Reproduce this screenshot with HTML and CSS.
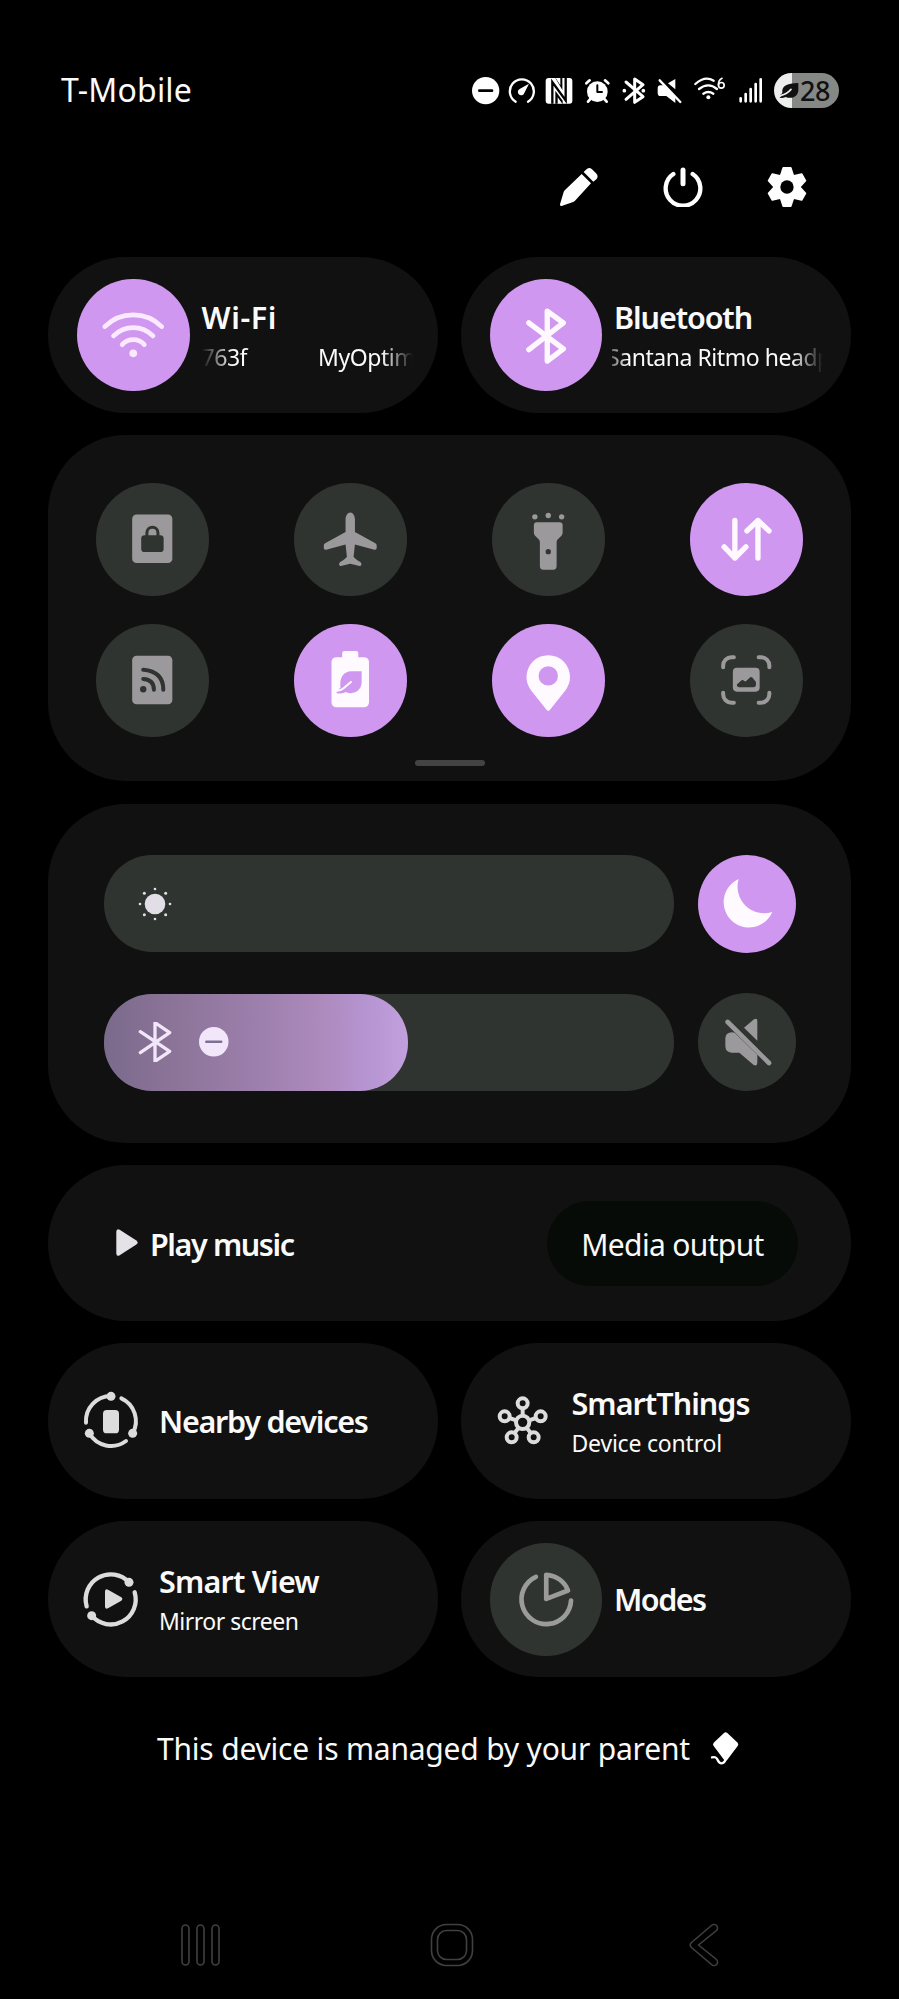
FILE: index.html
```html
<!DOCTYPE html>
<html lang="en">
<head>
<meta charset="utf-8">
<title>Quick panel</title>
<link rel="stylesheet" href="styles.css">
</head>
<body>
<header class="status">
  <span class="carrier">T-Mobile</span>
  <div class="status-icons">
    <svg width="32" height="35" viewBox="66 39 96 105"><circle cx="107" cy="92" r="41" fill="#fff"/><path d="M88 92h38" stroke="#000" stroke-width="8" stroke-linecap="round"/></svg>
    <svg width="36" height="35" viewBox="162 39 108 105"><path d="M197 125A36 36 0 1 1 234 125" fill="none" stroke="#fff" stroke-width="7" stroke-linecap="round"/><path d="M237 71L223 99A10 10 0 1 1 209 87Z" fill="#fff"/></svg>
    <svg width="38.7" height="35" viewBox="270 39 116 105"><rect x="287" y="54" width="80" height="77" rx="9" fill="#fff"/><path d="M307 131V66L347 121V54" fill="none" stroke="#000" stroke-width="7"/><path d="M316 131V92L338 122V131ZM316 54H337V90Z" fill="#000"/><path d="M317 54H331V76Z M323 131V112L337 131Z" fill="#fff"/></svg>
    <svg width="37" height="35" viewBox="386 39 111 105"><circle cx="441" cy="95" r="31" fill="#fff"/><path d="M441 76V96H455" fill="none" stroke="#000" stroke-width="6" stroke-linecap="round" stroke-linejoin="round"/><path d="M408 70L418 61M464 61L474 70M420 117L413 125M462 117L469 125" stroke="#fff" stroke-width="8" stroke-linecap="round"/></svg>
    <svg width="35.7" height="35" viewBox="497 39 107 105"><path d="M527 66L578 110L553 127V57L578 74L527 118" fill="none" stroke="#fff" stroke-width="9" stroke-linecap="round" stroke-linejoin="round"/><circle cx="522" cy="92" r="5.500" fill="#fff"/><circle cx="579" cy="92" r="5.500" fill="#fff"/></svg>
    <svg width="37" height="35" viewBox="604 39 111 105"><path d="M677 57V88L655 70ZM632 76H641L677 112V129L650 108H632Q624 108 624 98V86Q624 76 632 76Z" fill="#fff"/><path d="M630 61L692 126" stroke="#fff" stroke-width="7" stroke-linecap="round"/></svg>
    <svg width="43.7" height="35" viewBox="715 39 131 105"><path d="M737 72Q766 46 792 62M748 87Q776 65 802 87M761 101Q776 91 791 101" fill="none" stroke="#fff" stroke-width="7" stroke-linecap="round"/><circle cx="776" cy="112" r="6" fill="#fff"/><circle cx="815" cy="76" r="8.500" fill="none" stroke="#fff" stroke-width="5"/><path d="M806 75Q806 60 817 55" fill="none" stroke="#fff" stroke-width="5" stroke-linecap="round"/></svg>
    <svg width="42" height="35" viewBox="846 39 126 105"><path d="M872 115V124M887 102V124M902 87V124M917 72V124M932 58V124" stroke="#fff" stroke-width="8" stroke-linecap="round"/></svg>
    <div class="battery">
      <svg width="20" height="18" viewBox="0 0 60 54"><path d="M58 3V26C56 44 38 52 20 45Q10 49 2 47L10 40L3 38Q8 37 10 32C8 12 22 4 58 3Z" fill="#111"/><path d="M36 22Q24 36 6 40" stroke="#eee" stroke-width="5" fill="none" stroke-linecap="round"/></svg>
      <span>28</span>
    </div>
  </div>
</header>

<nav class="actions">
  <svg class="action" viewBox="-60 -60 120 120"><path d="M-57 52L-46 15Q-45 12 -42 9L8 -39L36 -11L-12 41Q-16 45 -20 46L-52 57Q-58 58 -57 52Z" fill="#fff"/><path d="M14 -45L21 -52Q30 -61 39 -53L51 -41Q60 -32 52 -23L43 -16Z" fill="#fff"/></svg>
  <svg class="action" viewBox="-60 -60 120 120"><path d="M-29 -39A52 52 0 1 0 29 -39" fill="none" stroke="#fff" stroke-width="13" stroke-linecap="round"/><path d="M0 -51V-10" stroke="#fff" stroke-width="15" stroke-linecap="round"/></svg>
  <svg class="action" viewBox="-60 -60 120 120"><g fill="#fff" stroke="#fff" stroke-width="6" stroke-linejoin="round"><path d="M-11 -57H11L19 -32H-19Z"/><path d="M-11 -57H11L19 -32H-19Z" transform="rotate(60)"/><path d="M-11 -57H11L19 -32H-19Z" transform="rotate(120)"/><path d="M-11 -57H11L19 -32H-19Z" transform="rotate(180)"/><path d="M-11 -57H11L19 -32H-19Z" transform="rotate(240)"/><path d="M-11 -57H11L19 -32H-19Z" transform="rotate(300)"/></g><circle r="42" fill="#fff"/><circle r="20" fill="#000"/></svg>
</nav>

<main class="panel">
  <div class="pair">
    <section class="card pill with-circle">
      <svg class="circle on" viewBox="-168 -168 336 336"><g fill="none" stroke="#fbe9ff" stroke-width="14" stroke-linecap="round"><path d="M-85 -26A121 121 0 0 1 85 -26"/><path d="M-59 2A82 82 0 0 1 59 2"/><path d="M-33 28A44 44 0 0 1 33 28"/></g><circle cy="54" r="11.500" fill="#fbe9ff"/></svg>
      <div class="labels"><span class="title t-wifi">Wi-Fi</span><div class="sub marquee"><span>763f</span><span>MyOptim</span></div></div>
    </section>
    <section class="card pill with-circle">
      <svg class="circle on" viewBox="-168 -168 336 336"><path d="M-52 -37L51 41L3 77V-72L51 -37L-52 43" fill="none" stroke="#fff8ff" stroke-width="16" stroke-linecap="round" stroke-linejoin="round"/></svg>
      <div class="labels"><span class="title t-bt">Bluetooth</span><div class="sub marquee bt"><span>Santana Ritmo headp</span></div></div>
    </section>
  </div>

  <section class="card tiles">
    <div class="tile-grid">
      <svg class="circle" viewBox="-168 -168 336 336"><rect x="-60" y="-74" width="120" height="145" rx="13" fill="#9b999b"/><rect x="-33" y="-12" width="67" height="50" rx="10" fill="#303430"/><path d="M-16 -8V-19A16.500 17 0 0 1 17 -19V-8" fill="none" stroke="#303430" stroke-width="9"/></svg>
      <svg class="circle" viewBox="-168 -168 336 336"><path d="M0 -80C8 -80 14 -70 14 -59V-22L75 12Q80 15 79 20V26Q78 33 72 31L14 16L10 52Q13 58 30 68Q35 72 33 77Q31 81 25 79L0 73L-25 79Q-31 81 -33 77Q-35 72 -30 68Q-13 58 -10 52L-14 16L-72 31Q-78 33 -79 26V20Q-80 15 -75 12L-14 -22V-59C-14 -70 -8 -80 0 -80Z" fill="#9b999b"/></svg>
      <svg class="circle" viewBox="-168 -168 336 336"><g fill="#9b999b"><circle cx="-40" cy="-67" r="8"/><circle cy="-71" r="8"/><circle cx="40" cy="-67" r="8"/><path d="M-34 -51H34Q43 -51 43 -42V-20Q43 -15 40 -11L28 1Q25 4 25 9V80Q25 91 15 91H-15Q-25 91 -25 80V9Q-25 4 -28 1L-40 -11Q-43 -15 -43 -20V-42Q-43 -51 -34 -51Z"/></g><circle cy="37" r="8" fill="#303430"/></svg>
      <svg class="circle on" viewBox="-168 -168 336 336"><path d="M-34 -56V56M-66 23L-34 56L-1 23M35 56V-56M2 -25L35 -56L68 -25" fill="none" stroke="#fff8ff" stroke-width="16" stroke-linecap="round" stroke-linejoin="round"/></svg>
      <svg class="circle" viewBox="-168 -168 336 336"><rect x="-60" y="-73" width="120" height="145" rx="13" fill="#9b999b"/><circle cx="-27" cy="27" r="9.500" fill="#303430"/><path d="M-27 -4Q5 -2 5 28M-27 -31Q33 -26 33 28" fill="none" stroke="#303430" stroke-width="12" stroke-linecap="round"/></svg>
      <svg class="circle on" viewBox="-168 -168 336 336"><rect x="-56" y="-69" width="112" height="150" rx="15" fill="#fffaff"/><rect x="-24" y="-87" width="48" height="30" rx="6" fill="#fffaff"/><path d="M34 -27V7C33 33 8 45 -13 35Q-27 41 -39 39Q-44 36 -39 32L-29 22C-33 -8 -20 -27 4 -27Z" fill="#cf97ef"/><path d="M2 5L-20 24Q-27 30 -38 31" fill="none" stroke="#fffaff" stroke-width="6" stroke-linecap="round"/></svg>
      <svg class="circle on" viewBox="-168 -168 336 336"><path d="M0 92Q-5 90 -10 82L-50 32Q-65 12 -65 -9A65 66 0 0 1 65 -9Q65 12 50 32L10 82Q5 90 0 92Z" fill="#fffaff"/><circle cy="-13" r="29" fill="#cf97ef"/></svg>
      <svg class="circle" viewBox="-168 -168 336 336"><path d="M-69 -39V-44A25 25 0 0 1 -44 -69H-37M37 -69H44A25 25 0 0 1 69 -44V-39M69 37V42A25 25 0 0 1 44 67H37M-37 67H-44A25 25 0 0 1 -69 42V37" fill="none" stroke="#9b999b" stroke-width="12" stroke-linecap="round"/><rect x="-40" y="-37" width="80" height="71" rx="12" fill="#9b999b"/><path d="M-28 13L-14 0Q-10 -2 -6 2L-2 4L12 -9Q15 -11 18 -8L29 5V15Q28 21 22 21H-21Q-27 21 -28 15Z" fill="#303430"/></svg>
    </div>
    <div class="handle"></div>
  </section>

  <section class="card sliders">
    <div class="slider-row">
      <div class="track"><svg class="level-icon" viewBox="-60 -60 120 120"><g fill="#e2dee8"><circle r="31"/><circle cy="-45" r="4"/><circle cy="45" r="4"/><circle cx="-45" r="4"/><circle cx="45" r="4"/><circle cx="-32" cy="-32" r="4.500"/><circle cx="32" cy="-32" r="4.500"/><circle cx="-32" cy="32" r="4.500"/><circle cx="32" cy="32" r="4.500"/></g></svg></div>
      <svg class="circle small on" viewBox="-147 -147 294 294"><path d="M-25 -75A76 76 0 1 0 76 24A80 80 0 0 1 -25 -75Z" fill="#fffaff"/></svg>
    </div>
    <div class="slider-row">
      <div class="track"><div class="fill"><svg class="level-icon" viewBox="-60 -60 120 120"><path d="M-44 -31L44 28L0 58V-58L44 -28L-44 32" fill="none" stroke="#f2e6fa" stroke-width="10" stroke-linecap="round" stroke-linejoin="round"/></svg><svg class="dnd" viewBox="-44 -44 88 88"><circle r="44" fill="#f2e6fa"/><path d="M-22 0H22" stroke="#806f92" stroke-width="8" stroke-linecap="round"/></svg></div></div>
      <svg class="circle small" viewBox="-147 -147 294 294"><path d="M-9 -43L21 -68Q31 -74 31 -63V-4ZM-37 -28L31 38V62Q30 74 20 69L-23 32H-46Q-65 30 -65 12V-10Q-65 -28 -45 -29Z" fill="#9b999b"/><path d="M-58 -60L66 63" stroke="#9b999b" stroke-width="14" stroke-linecap="round"/></svg>
    </div>
  </section>

  <section class="card pill media">
    <svg class="play" viewBox="0 0 66 80"><path d="M1 8Q1 -3 11 2L60 33Q70 40 60 47L11 78Q1 83 1 72Z" fill="#e4e2e6"/></svg>
    <span class="title t-play">Play music</span>
    <span class="media-output"><span>Media output</span></span>
  </section>

  <div class="pair">
    <section class="card pill plain">
      <svg class="glyph" viewBox="-90 -90 180 180"><g fill="#dcdcdc"><circle cy="-74" r="13.500"/><circle cx="-65" cy="37" r="13.500"/><circle cx="65" cy="37" r="13.500"/><rect x="-24" y="-33" width="48" height="70" rx="11"/></g><path d="M0 -75A75 75 0 0 0 -75 5M31 -68A75 75 0 0 1 65 37M-65 37A75 75 0 0 0 45 60" fill="none" stroke="#dcdcdc" stroke-width="12" stroke-linecap="round"/></svg>
      <div class="labels"><span class="title t-near">Nearby devices</span></div>
    </section>
    <section class="card pill plain">
      <svg class="glyph" viewBox="-86 -90 180 180"><g fill="none" stroke="#dcdcdc" stroke-width="12"><circle cy="4" r="20"/><circle cy="-53" r="15"/><circle cx="-54" cy="-14" r="15"/><circle cx="54" cy="-14" r="15"/><circle cx="-33" cy="49" r="15"/><circle cx="33" cy="49" r="15"/><path d="M0 -38V-16M-40 -9L-19 -2M40 -9L19 -2M-24 36L-12 20M24 36L12 20"/></g></svg>
      <div class="labels"><span class="title t-st">SmartThings</span><span class="sub t-dc">Device control</span></div>
    </section>
  </div>

  <div class="pair">
    <section class="card pill plain">
      <svg class="glyph" viewBox="-88 -90 180 180"><g fill="#dcdcdc"><circle cx="56" cy="-50" r="13.500"/><circle cx="-56" cy="50" r="13.500"/><path d="M-16 -23Q-15 -32 -7 -28L33 -5Q39 0 33 5L-7 28Q-15 32 -16 23Z"/></g><path d="M56 -50A75 75 0 0 0 -71 22M-56 50A75 75 0 0 0 73 -20" fill="none" stroke="#dcdcdc" stroke-width="13" stroke-linecap="round"/></svg>
      <div class="labels"><span class="title t-sv">Smart View</span><span class="sub t-ms">Mirror screen</span></div>
    </section>
    <section class="card pill with-circle">
      <svg class="circle" viewBox="-168 -168 336 336"><path d="M-31 -67A74 74 0 1 0 74 4M0 -73A74 74 0 0 1 65 -26L0 -1Z" fill="none" stroke="#9b9b9b" stroke-width="14" stroke-linecap="round" stroke-linejoin="round"/></svg>
      <div class="labels"><span class="title t-modes">Modes</span></div>
    </section>
  </div>
</main>

<footer class="managed">
  <span>This device is managed by your parent</span>
  <svg class="kite" viewBox="30 33 87 102"><path d="M72 39Q77 34 82 39L113 68Q117 73 113 78L82 119Q77 124 72 119L41 78Q37 73 41 68Z" fill="#fff"/><path d="M36 112C58 106 48 130 65 130Q74 129 78 116" fill="none" stroke="#fff" stroke-width="7" stroke-linecap="round"/></svg>
</footer>

<nav class="softkeys">
  <svg class="recents" width="40" height="44" viewBox="0 0 40 44"><g fill="none" stroke="#3f403f" stroke-width="1.600"><rect x="1" y="2" width="7" height="40" rx="3.500"/><rect x="16" y="2" width="7" height="40" rx="3.500"/><rect x="31" y="2" width="7" height="40" rx="3.500"/></g></svg>
  <svg class="home" width="44" height="44" viewBox="0 0 44 44"><g fill="none" stroke="#3f403f" stroke-width="1.600"><rect x="1.500" y="1.500" width="41" height="41" rx="15"/><rect x="7.500" y="7.500" width="29" height="29" rx="9"/></g></svg>
  <svg class="back" width="30" height="44" viewBox="0 0 30 44"><path d="M22.500 2.500L2.500 19.500Q0 22 2.500 24.500L22.500 41.500A3 3 0 0 0 27.500 36.500L9.500 22L27.500 7.500A3 3 0 0 0 22.500 2.500Z" fill="none" stroke="#3f403f" stroke-width="1.600" stroke-linejoin="round"/></svg>
</nav>
</body>
</html>
```
FILE: styles.css
```css
* { box-sizing: border-box; }

body {
  margin: 0;
  width: 899px;
  height: 1999px;
  background: #000;
  color: #fafafa;
  font-family: "Noto Sans", "Open Sans", sans-serif;
  overflow: hidden;
}

svg { display: block; flex: none; }

.status {
  display: flex;
  align-items: center;
  justify-content: space-between;
  height: 35px;
  margin: 73px 60px 0 61px;
}

.carrier { padding-bottom: 3px; font-size: 32px; line-height: 31px; letter-spacing: 0.2px; white-space: nowrap; }

.status-icons { display: flex; align-items: center; }

.battery {
  display: flex;
  align-items: center;
  gap: 1px;
  width: 65px;
  height: 35px;
  padding-left: 5px;
  border-radius: 18px;
  background: linear-gradient(90deg, #eee 18px, #868886 18px);
  color: #111;
  font-size: 27px;
  line-height: 32px;
  font-weight: 500;
  letter-spacing: -0.500px;
}

.actions {
  display: flex;
  justify-content: flex-end;
  gap: 64px;
  margin: 59px 92px 0 0;
}

.action { width: 40px; height: 40px; }

.panel {
  display: flex;
  flex-direction: column;
  gap: 22.300px;
  margin: 50px 48px 0;
}

.pair { display: grid; grid-template-columns: 390px 390.500px; gap: 22.500px; }

.card { background: #111; border-radius: 78px; }

.pill { display: flex; align-items: center; height: 156px; }

.with-circle { padding-left: 29px; gap: 12px; }

.plain { padding-left: 33px; gap: 18px; }

.circle { width: 112.500px; height: 112.500px; border-radius: 50%; background: #303430; }
.circle.small { width: 98px; height: 98px; }
.circle.on { background: #cf97ef; }

.glyph { width: 60px; height: 60px; }

.labels { display: flex; flex-direction: column; padding-top: 2px; }

.title { font-size: 30.500px; line-height: 40px; font-weight: 600; white-space: nowrap; }
.t-wifi { letter-spacing: 0.600px; }
.t-bt { letter-spacing: -1.100px; }
.t-play { letter-spacing: -1.400px; }
.t-near { margin-top: -2px; letter-spacing: -1.250px; }
.t-st { letter-spacing: -0.950px; }
.t-sv { letter-spacing: -0.800px; }
.t-modes { margin-top: -2px; letter-spacing: -1.500px; }

.sub { font-size: 23px; line-height: 38px; letter-spacing: -0.200px; white-space: nowrap; padding-top: 1px; }
.t-ms { letter-spacing: -0.500px; }

.marquee {
  display: flex;
  gap: 71px;
  width: 211px;
  letter-spacing: -0.450px;
  overflow: hidden;
  mask-image: linear-gradient(90deg, transparent 0, #000 30px, #000 180px, transparent 211px);
}
.marquee.bt {
  margin-left: -2px;
  text-indent: -5px;
  mask-image: linear-gradient(90deg, #0006 0, #000 16px, #000 180px, transparent 211px);
}

.tiles { height: 346px; padding: 48px 48px 0; }

.tile-grid {
  display: grid;
  grid-template-columns: repeat(4, 112.500px);
  justify-content: space-between;
  row-gap: 28.500px;
}

.handle { width: 70px; height: 6px; margin: 23.500px auto 0; border-radius: 3px; background: #434343; }

.sliders {
  display: flex;
  flex-direction: column;
  gap: 40.500px;
  height: 339px;
  padding: 51px 55.500px 0 56px;
}

.slider-row { display: flex; align-items: center; justify-content: space-between; }

.track {
  display: flex;
  align-items: center;
  width: 570px;
  height: 97px;
  padding-left: 31px;
  border-radius: 48px;
  background: #303430;
}

.fill {
  display: flex;
  align-items: center;
  gap: 24px;
  width: 304px;
  height: 97px;
  margin-left: -31px;
  padding-left: 31px;
  border-radius: 48px;
  background: linear-gradient(90deg, #7a6a8c 0, #8d7599 25%, #9c7fac 50%, #ad8bbd 72%, #b594d2 86%, #c39fdd 100%);
}

.level-icon { width: 40px; height: 40px; }
.dnd { width: 29.500px; height: 29.500px; }

.media { padding: 0 53px 0 68px; }
.play { width: 22px; height: 27px; margin-right: 12px; }
.t-play { padding-top: 2px; }

.media-output {
  display: flex;
  align-items: center;
  justify-content: center;
  width: 251px;
  height: 85px;
  margin-top: 1px;
  margin-left: auto;
  padding-top: 3px;
  border-radius: 43px;
  background: #070b07;
  font-size: 30px;
  letter-spacing: -0.650px;
}

.managed {
  display: flex;
  align-items: center;
  gap: 20px;
  height: 44px;
  margin: 49px 0 0 157px;
  font-size: 30px;
  letter-spacing: -0.200px;
  white-space: nowrap;
}

.kite { width: 29px; height: 34px; }

.softkeys {
  display: flex;
  margin: 153px 0 0 181px;
}
.home { margin-left: 209px; }
.back { margin-left: 215px; }
```
